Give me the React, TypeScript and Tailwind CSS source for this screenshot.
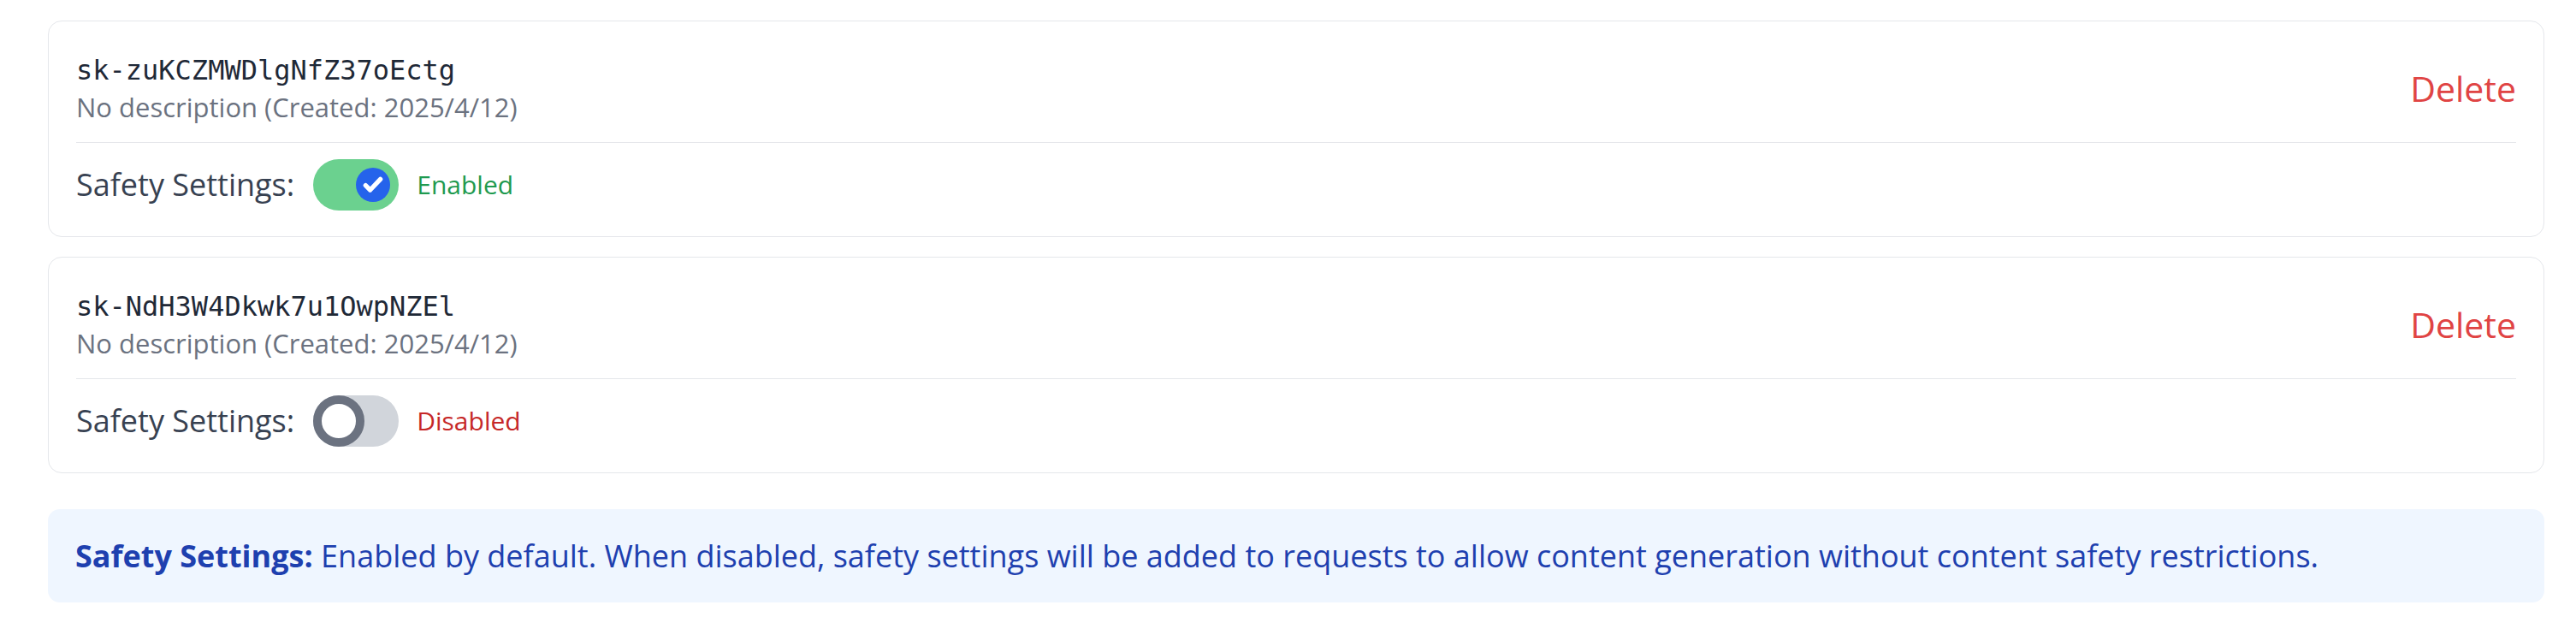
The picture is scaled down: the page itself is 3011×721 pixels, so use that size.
import { useState } from "react";

interface ApiKey {
  id: number;
  key: string;
  description: string;
  created: string;
  safety: boolean;
}

const initialKeys: ApiKey[] = [
  { id: 1, key: "sk-zuKCZMWDlgNfZ37oEctg", description: "No description", created: "2025/4/12", safety: true },
  { id: 2, key: "sk-NdH3W4Dkwk7u1OwpNZEl", description: "No description", created: "2025/4/12", safety: false },
];

function SafetyToggle({ on, onChange }: { on: boolean; onChange: () => void }) {
  return (
    <button
      type="button"
      onClick={onChange}
      className={`flex items-center w-[100px] h-[60px] rounded-full ${on ? "bg-[#6bd18f] justify-end pr-[10px]" : "bg-[#d1d5db] justify-start"}`}
    >
      {on ? (
        <span className="flex items-center justify-center w-[40px] h-[40px] rounded-full bg-[#2563eb]">
          <svg viewBox="0 0 24 24" className="w-[32px] h-[32px]" fill="none" stroke="white" strokeWidth="4" strokeLinecap="round" strokeLinejoin="round">
            <path d="M5.5 12.5l4 4L18.5 7" />
          </svg>
        </span>
      ) : (
        <span className="w-[60px] h-[60px] rounded-full bg-white border-[10px] border-[#6b7280]" />
      )}
    </button>
  );
}

export default function App() {
  const [keys, setKeys] = useState(initialKeys);

  const toggle = (id: number) =>
    setKeys((ks) => ks.map((k) => (k.id === id ? { ...k, safety: !k.safety } : k)));

  return (
    <div className="min-h-screen bg-white pt-[24px] pl-[56px] pr-[37px] font-['Open_Sans',sans-serif]">
      <div className="flex flex-col gap-[23px]">
        {keys.map((k) => (
          <div key={k.id} className="border border-[#e5e7eb] rounded-[16px] px-[32px] pt-[35px] pb-[30px]">
            <div className="flex items-center justify-between pb-[20px] border-b border-[#e5e7eb]">
              <div>
                <div className="font-['DejaVu_Sans_Mono',monospace] text-[32px] leading-[44px] text-[#1f2937]">{k.key}</div>
                <div className="text-[31px] leading-[42px] text-[#6b7280]">
                  {k.description} (Created: {k.created})
                </div>
              </div>
              <button className="text-[41px] leading-[50px] text-[#e04444]">Delete</button>
            </div>
            <div className="flex items-center pt-[19px]">
              <span className="text-[36px] leading-[48px] text-[#374151]">Safety Settings:</span>
              <span className="ml-[22px]">
                <SafetyToggle on={k.safety} onChange={() => toggle(k.id)} />
              </span>
              <span className={`ml-[21px] text-[30px] leading-[40px] ${k.safety ? "text-[#1f9a4f]" : "text-[#c62828]"}`}>
                {k.safety ? "Enabled" : "Disabled"}
              </span>
            </div>
          </div>
        ))}
      </div>
      <div className="mt-[42px] bg-[#eff6ff] rounded-[14px] px-[32px] h-[109px] flex items-center text-[36px] leading-[48px] text-[#1e40af]">
        <p>
          <span className="font-bold">Safety Settings:</span> Enabled by default. When disabled, safety settings will be added to requests to allow content generation without content safety restrictions.
        </p>
      </div>
    </div>
  );
}
